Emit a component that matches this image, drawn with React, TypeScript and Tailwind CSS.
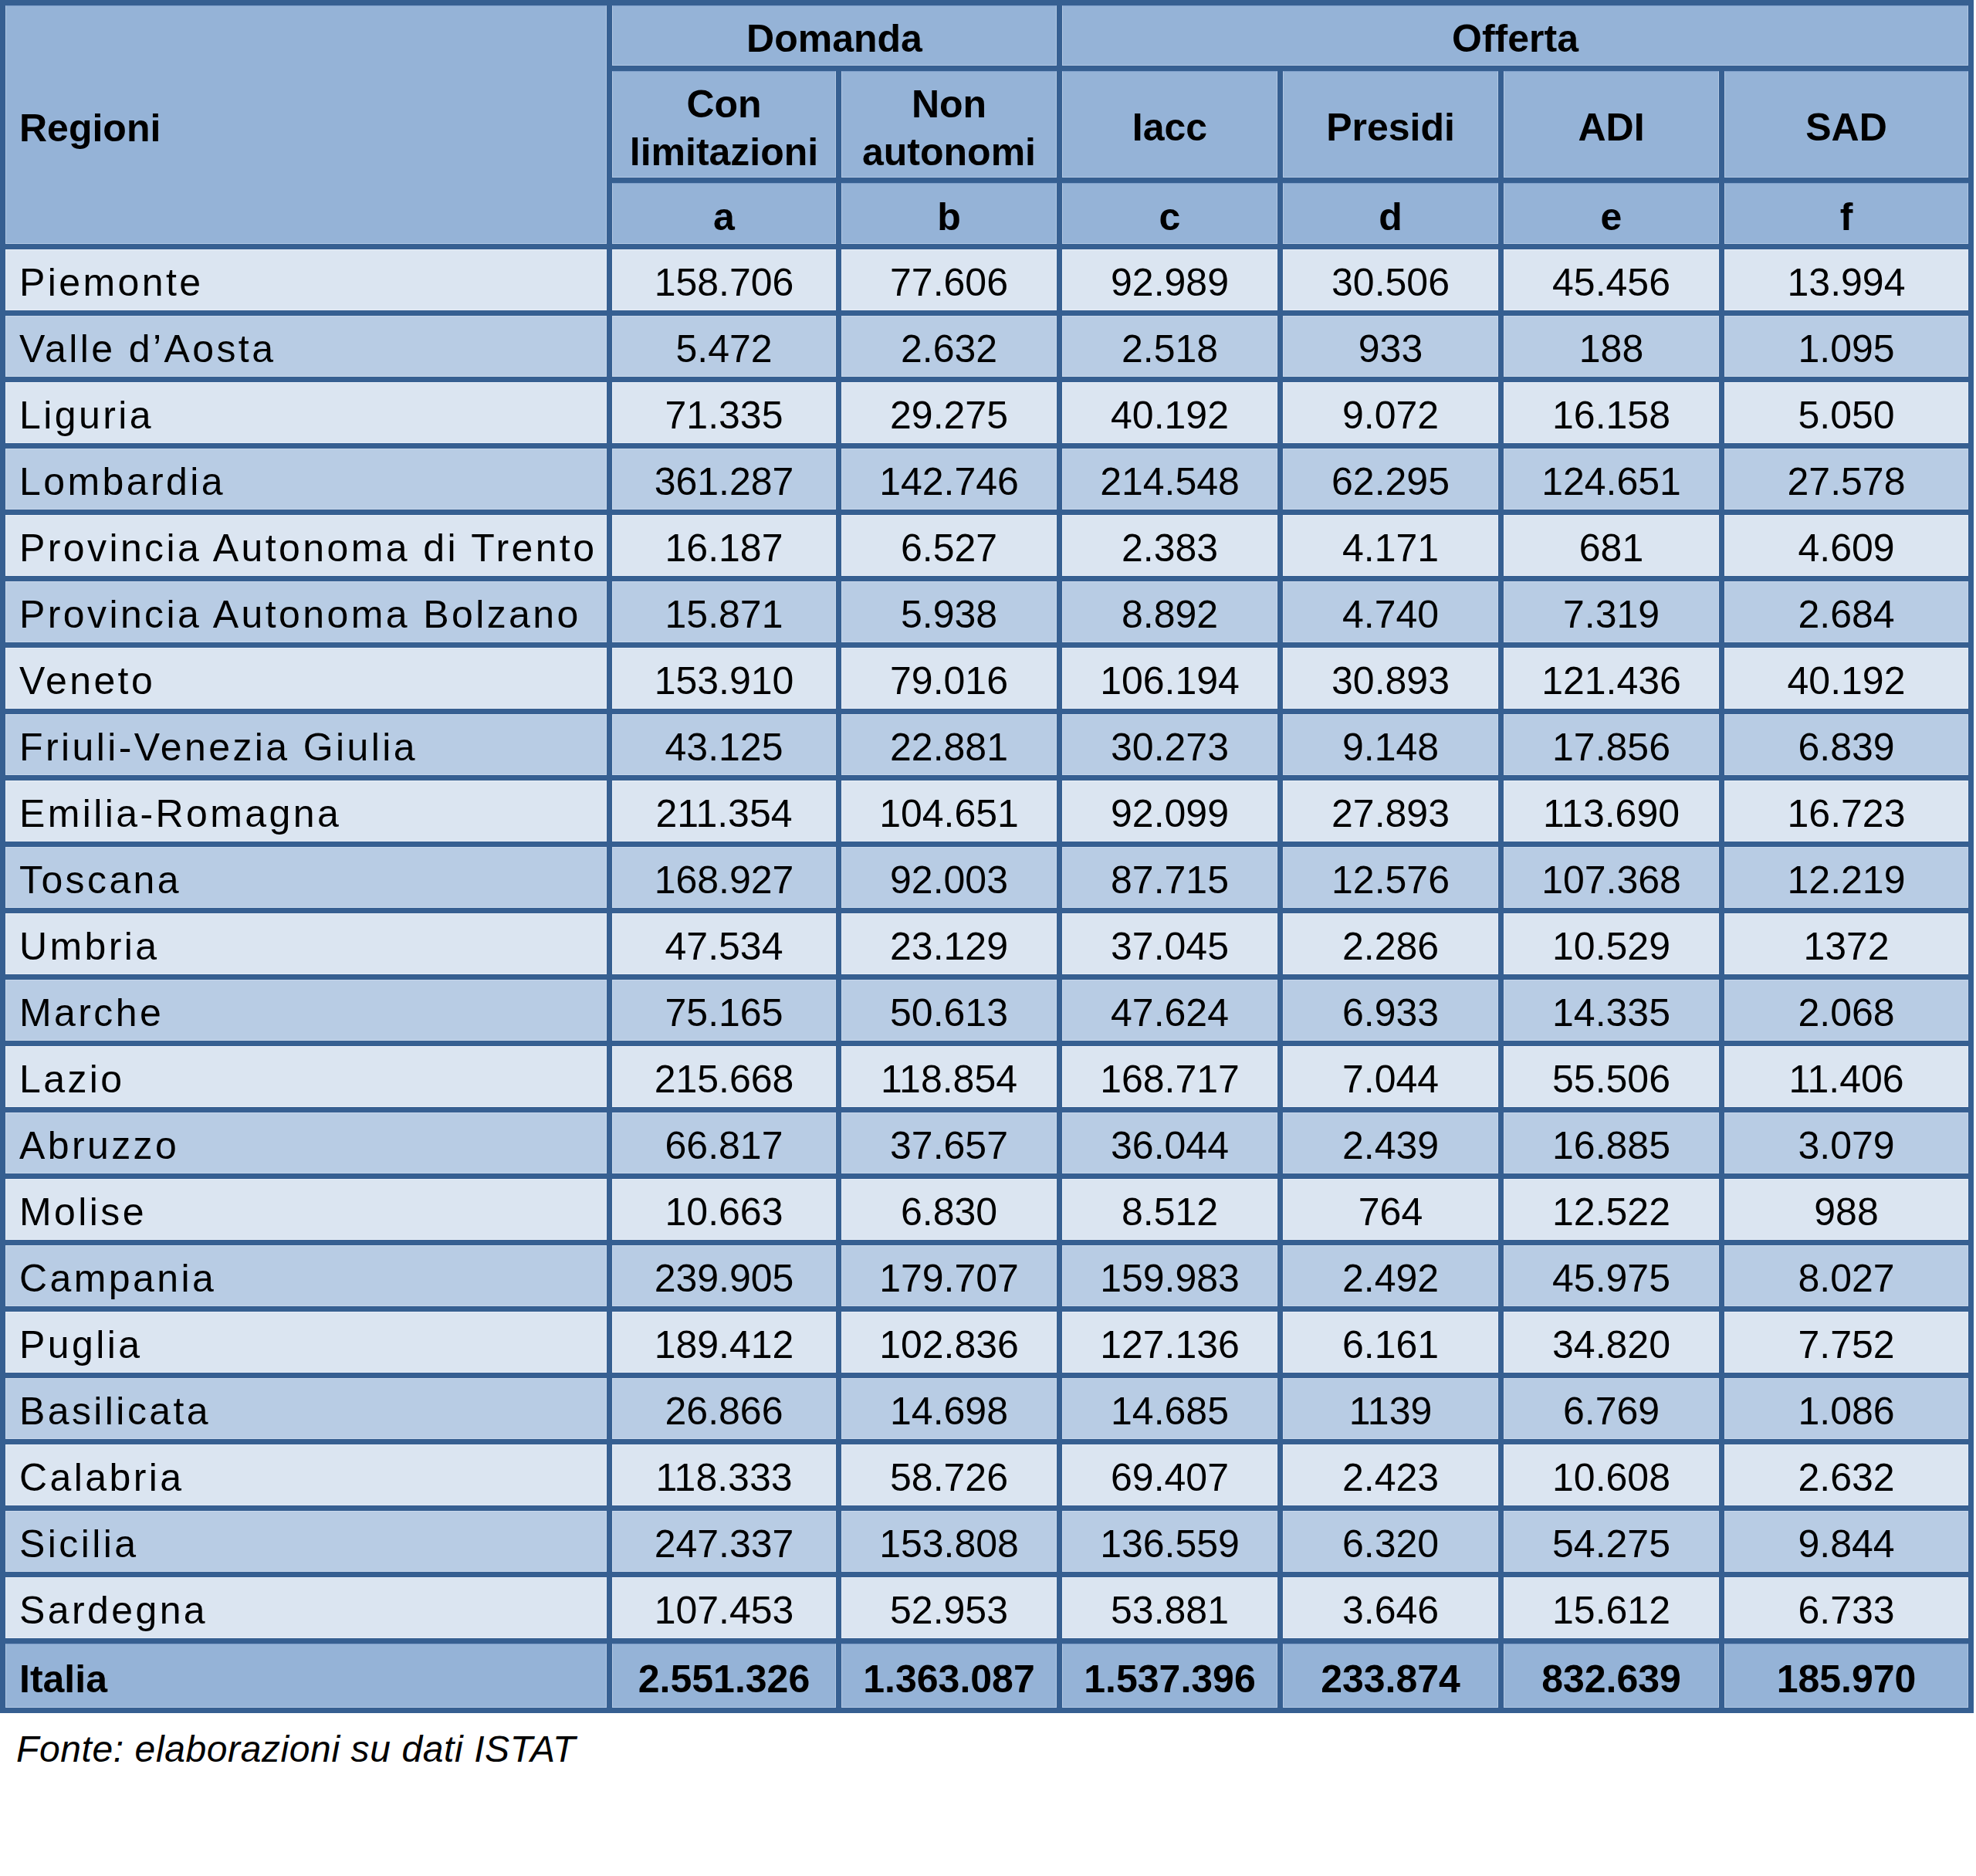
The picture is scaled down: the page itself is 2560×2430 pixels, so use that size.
import React from 'react';

const ROWS: [string, string[]][] = [
  ['Piemonte', ['158.706', '77.606', '92.989', '30.506', '45.456', '13.994']],
  ['Valle d’Aosta', ['5.472', '2.632', '2.518', '933', '188', '1.095']],
  ['Liguria', ['71.335', '29.275', '40.192', '9.072', '16.158', '5.050']],
  ['Lombardia', ['361.287', '142.746', '214.548', '62.295', '124.651', '27.578']],
  ['Provincia Autonoma di Trento', ['16.187', '6.527', '2.383', '4.171', '681', '4.609']],
  ['Provincia Autonoma Bolzano', ['15.871', '5.938', '8.892', '4.740', '7.319', '2.684']],
  ['Veneto', ['153.910', '79.016', '106.194', '30.893', '121.436', '40.192']],
  ['Friuli-Venezia Giulia', ['43.125', '22.881', '30.273', '9.148', '17.856', '6.839']],
  ['Emilia-Romagna', ['211.354', '104.651', '92.099', '27.893', '113.690', '16.723']],
  ['Toscana', ['168.927', '92.003', '87.715', '12.576', '107.368', '12.219']],
  ['Umbria', ['47.534', '23.129', '37.045', '2.286', '10.529', '1372']],
  ['Marche', ['75.165', '50.613', '47.624', '6.933', '14.335', '2.068']],
  ['Lazio', ['215.668', '118.854', '168.717', '7.044', '55.506', '11.406']],
  ['Abruzzo', ['66.817', '37.657', '36.044', '2.439', '16.885', '3.079']],
  ['Molise', ['10.663', '6.830', '8.512', '764', '12.522', '988']],
  ['Campania', ['239.905', '179.707', '159.983', '2.492', '45.975', '8.027']],
  ['Puglia', ['189.412', '102.836', '127.136', '6.161', '34.820', '7.752']],
  ['Basilicata', ['26.866', '14.698', '14.685', '1139', '6.769', '1.086']],
  ['Calabria', ['118.333', '58.726', '69.407', '2.423', '10.608', '2.632']],
  ['Sicilia', ['247.337', '153.808', '136.559', '6.320', '54.275', '9.844']],
  ['Sardegna', ['107.453', '52.953', '53.881', '3.646', '15.612', '6.733']],
];

const TOTALS = ['2.551.326', '1.363.087', '1.537.396', '233.874', '832.639', '185.970'];

const head = 'bg-[#95b3d7] border border-[#b3c8e3] border-t-[#7f9fca] flex items-center justify-center text-center font-bold text-black pt-[9px]';

const App = () => {
  return (
    <div className="w-[2560px] h-[2430px] bg-white font-['Liberation_Sans',Arial,sans-serif] text-[50px] text-black">
      <div className="w-[2557px] bg-[#365f91] p-[7px] grid gap-[7px] grid-cols-[779px_290px_279px_279px_279px_279px_316px] grid-rows-[78px_138px_79px_repeat(21,79px)_83px]">
        {/* header */}
        <div className={`${head} row-span-3 !justify-start !text-left pl-[17px]`}>Regioni</div>
        <div className={`${head} col-span-2`}>Domanda</div>
        <div className={`${head} col-span-4`}>Offerta</div>

        <div className={`${head} leading-[62px]`}>Con<br />limitazioni</div>
        <div className={`${head} leading-[62px]`}>Non<br />autonomi</div>
        <div className={head}>Iacc</div>
        <div className={head}>Presidi</div>
        <div className={head}>ADI</div>
        <div className={head}>SAD</div>

        {['a', 'b', 'c', 'd', 'e', 'f'].map((l) => (
          <div key={l} className={head}>{l}</div>
        ))}

        {/* data rows */}
        {ROWS.map(([name, vals], i) => {
          const bg = i % 2 === 0 ? 'bg-[#dbe5f1] border-[#e8eef7]' : 'bg-[#b8cce4] border-[#c9d8eb]';
          return (
            <React.Fragment key={name}>
              <div className={`${bg} border flex items-center pl-[17px] pt-[7px] tracking-[3.4px] whitespace-nowrap`}>{name}</div>
              {vals.map((v, j) => (
                <div key={j} className={`${bg} border flex items-center justify-center pt-[7px]`}>{v}</div>
              ))}
            </React.Fragment>
          );
        })}

        {/* totale */}
        <div className={`${head} !justify-start pl-[17px]`}>Italia</div>
        {TOTALS.map((v, j) => (
          <div key={j} className={head}>{v}</div>
        ))}
      </div>

      <p className="italic text-[48px] leading-[55px] tracking-[0.6px] mt-[19px] pl-[21px]">Fonte: elaborazioni su dati ISTAT</p>
    </div>
  );
};

export default App;
